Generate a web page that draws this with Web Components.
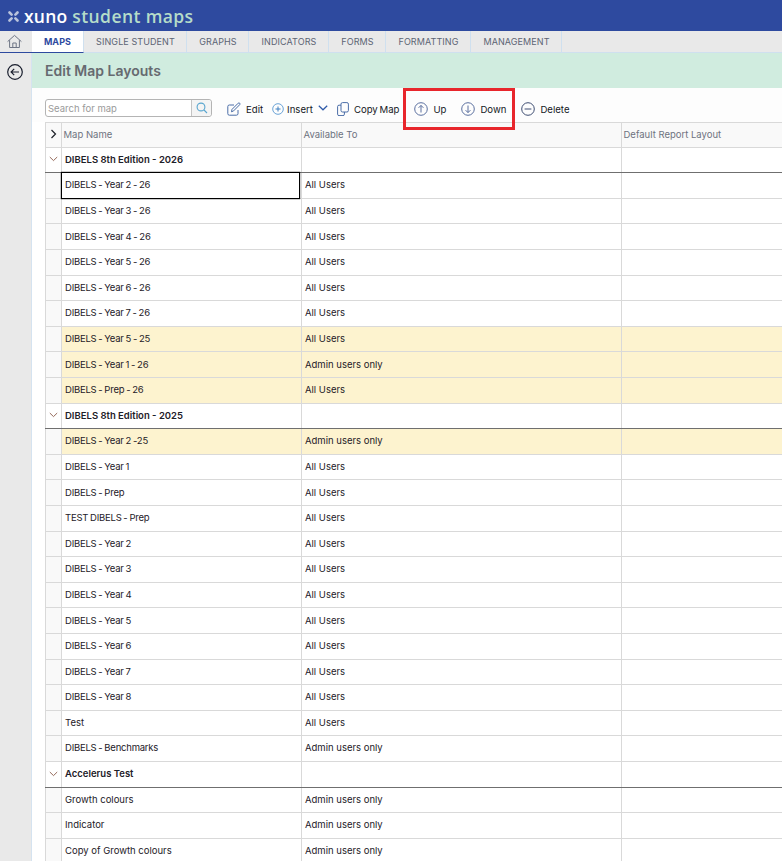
<!DOCTYPE html>
<html><head><meta charset="utf-8"><title>Edit Map Layouts</title>
<style>
html,body{margin:0;padding:0;height:861px;overflow:hidden;background:#fff;font-family:Inter,"Noto Sans",sans-serif}
</style></head><body>
<xuno-app></xuno-app>
<script>
const FONT='Inter,"Noto Sans",sans-serif';
class XunoHeader extends HTMLElement{constructor(){super();this.attachShadow({mode:'open'}).innerHTML=`<style>
:host{display:flex;align-items:center;height:31px;background:#2e4a9f;padding-left:8px;box-sizing:border-box;font:600 17.5px "Open Sans",sans-serif}
svg{width:11px;height:11px;flex:none;margin:1px 5px 0 0}
.a{color:#fff;margin-right:5px;letter-spacing:.2px}.b{color:#b5dcc9;letter-spacing:.4px}
</style><svg viewBox="0 0 11 11"><g stroke="#b9c3dc" stroke-width="2.6" stroke-linecap="round"><path d="M1.5 1.5 3.6 3.6M9.5 1.5 7.4 3.6M1.5 9.5 3.6 7.4M9.5 9.5 7.4 7.4"/></g></svg><span class="a">xuno</span><span class="b">student maps</span>`}}
customElements.define('xuno-header',XunoHeader);
class XunoTabs extends HTMLElement{constructor(){super();const tabs=[['MAPS',52,1],['SINGLE STUDENT',103],['GRAPHS',62],['INDICATORS',80],['FORMS',57],['FORMATTING',85],['MANAGEMENT',91]];
this.attachShadow({mode:'open'}).innerHTML=`<style>
:host{display:flex;height:22px;background:#e9e9e9;box-sizing:border-box;font:400 9px ${FONT};color:#5c6474}
.home{width:32px;box-sizing:border-box;border-bottom:1px solid #2e4a9f;display:flex;align-items:center;padding:0 0 1px 7px}
.t{box-sizing:border-box;display:flex;align-items:center;justify-content:center;padding-left:1px;border-right:1px solid #cfe0ef;border-bottom:1px solid #cfe0ef;letter-spacing:.01em}
.on{background:#fff;color:#2e4a9f;font-weight:700;border-bottom:1px solid #2e4a9f;border-right:1px solid #cfe0ef;padding-left:0}
.rest{flex:1;border-bottom:1px solid #cfe0ef}
</style><div class="home"><svg width="15" height="15" viewBox="0 0 15 15" fill="none" stroke="#6d7484" stroke-width="1"><path d="M.6 7.6 7.5 1.4l6.9 6.2"/><path d="M2.6 6.2v7.3h9.8V6.2"/><path d="M5.8 13.5V9h3.4v4.5"/></svg></div>${tabs.map(t=>`<div class="t${t[2]?' on':''}" style="width:${t[1]}px">${t[0]}</div>`).join('')}<div class="rest"></div>`}}
customElements.define('xuno-tabs',XunoTabs);
class XunoSidebar extends HTMLElement{constructor(){super();this.attachShadow({mode:'open'}).innerHTML=`<style>
:host{display:block;width:32px;flex:none;box-sizing:border-box;background:#e9e9e9;border-right:1px solid #d5e3f0;padding:11px 0 0 7px}
svg{display:block}
</style><svg width="16" height="16" viewBox="0 0 16 16" fill="none" stroke="#1a1f2e" stroke-width="1.2"><circle cx="8" cy="8" r="7.3"/><path d="M12 8H4.2M7.2 4.9 4.1 8l3.1 3.1"/></svg>`}}
customElements.define('xuno-sidebar',XunoSidebar);
class XunoTitle extends HTMLElement{constructor(){super();this.attachShadow({mode:'open'}).innerHTML=`<style>
:host{display:flex;align-items:center;height:35px;background:#d0ecdf;padding-left:13px;font:600 14px ${FONT};color:#666a70}
</style><slot></slot>`}}
customElements.define('xuno-title',XunoTitle);
class XunoSearch extends HTMLElement{constructor(){super();this.attachShadow({mode:'open'}).innerHTML=`<style>
:host{display:flex;width:167px;height:18px;box-sizing:border-box;border:1px solid #b4b4b4;border-radius:3px;background:#fff;font:400 9.5px ${FONT};color:#9a9a9a;flex:none;margin-top:-2px}
.i{flex:1;padding-left:2px;display:flex;align-items:center}
.b{width:20px;box-sizing:border-box;border-left:1px solid #c4c4c4;background:#f4f4f4;display:flex;align-items:center;justify-content:center;border-radius:0 3px 3px 0}
</style><div class="i">Search for map</div><div class="b"><svg width="12" height="12" viewBox="0 0 12 12" fill="none" stroke="#5aa6cf" stroke-width="1.1"><circle cx="5" cy="5" r="3.9"/><path d="m8 8 3 3"/></svg></div>`}}
customElements.define('xuno-search',XunoSearch);
class XunoTool extends HTMLElement{constructor(){super();this.attachShadow({mode:'open'}).innerHTML=`<style>
:host{display:inline-flex;align-items:center;flex:none;font:400 9.6px ${FONT};color:#141824}
span{display:inline-flex;align-items:center}
</style><span part="i"><slot name="icon"></slot></span><slot></slot>`}}
customElements.define('xuno-tool',XunoTool);
const circ=(inner,c='#5a6f9f')=>`<svg slot="icon" width="14" height="14" viewBox="0 0 14 14" fill="none" stroke="${c}" stroke-width="1"><circle cx="7" cy="7" r="6.3"/>${inner}</svg>`;
class XunoToolbar extends HTMLElement{constructor(){super();this.attachShadow({mode:'open'}).innerHTML=`<style>
:host{display:flex;align-items:center;height:34px;padding:8px 0 0 13px;box-sizing:border-box;position:relative;background:#fdfdfd}
xuno-search{margin-right:15px}
svg{margin-right:5px}
.box{position:absolute;left:370.5px;top:0;width:112.5px;height:42px;box-sizing:border-box;border:3.5px solid #e8262c;pointer-events:none;z-index:2}
</style><xuno-search></xuno-search>
<xuno-tool style="margin-right:9px"><svg slot="icon" width="14" height="14" viewBox="0 0 14 14" fill="none" stroke="#4a6da7" stroke-width="1"><path d="M11 8v3.6a1.6 1.6 0 0 1-1.6 1.6H2.4A1.6 1.6 0 0 1 .8 11.6V4.6A1.6 1.6 0 0 1 2.4 3H7"/><path d="M4.5 9.8 5 7.4 11.2 1.2a1 1 0 0 1 1.5 1.5L6.6 8.9z"/></svg>Edit</xuno-tool>
<xuno-tool style="margin-right:9px"><svg slot="icon" width="12" height="12" viewBox="0 0 12 12" fill="none" stroke="#6aa3d6" stroke-width="1" style="margin-right:3px"><circle cx="6" cy="6" r="5.3"/><path d="M6 3.5v5M3.5 6h5" stroke="#3d7fc0"/></svg>Insert<svg width="10" height="6" viewBox="0 0 10 6" fill="none" stroke="#2e5aa8" stroke-width="1.2" style="margin:0 0 2px 5px"><path d="m.8.8 4.2 4 4.2-4"/></svg></xuno-tool>
<xuno-tool style="margin-right:15px;word-spacing:-1px"><svg slot="icon" width="12" height="14" viewBox="0 0 12 14" fill="none" stroke="#4a6da7" stroke-width="1"><rect x="4" y=".6" width="7.4" height="9.4" rx="1.5"/><path d="M4 3.2H2A1.4 1.4 0 0 0 .6 4.6v7.6A1.4 1.4 0 0 0 2 13.6h4a1.4 1.4 0 0 0 1.4-1.4V10"/></svg>Copy Map</xuno-tool>
<xuno-tool style="margin-right:15px">${circ('<path d="M7 10.5v-7M4.6 5.8 7 3.4l2.4 2.4"/>')}Up</xuno-tool>
<xuno-tool style="margin-right:15px">${circ('<path d="M7 3.5v7M4.6 8.2 7 10.6l2.4-2.4"/>')}Down</xuno-tool>
<xuno-tool>${circ('<path d="M3.6 7h6.8"/>','#3e4d72')}Delete</xuno-tool>
<div class="box"></div>`}}
customElements.define('xuno-toolbar',XunoToolbar);
class XunoRow extends HTMLElement{
connectedCallback(){if(this.shadowRoot)return;const k=this.getAttribute('kind')||'';this.attachShadow({mode:'open'}).innerHTML=`<style>
:host{display:grid;grid-template-columns:17px 240px 320px 1fr;height:25.6px;box-sizing:border-box;border-bottom:1px solid ${k==='group'?'#6f6f6f':'#d9d9d9'};font:${k==='group'?'600':'400'} 9.5px ${FONT};color:#1d2028;background:${k==='warn'?'#fdf3cf':'#fff'}}
:host([kind=head]){background:#f9f9f9;color:#6e7380;height:25.7px;border-top:1px solid #d9d9d9;border-bottom:1px solid #d9d9d9}
div{display:flex;align-items:center;box-sizing:border-box;border-right:1px solid #d9d9d9;padding:0 0 1.3px 3px;white-space:nowrap;min-width:0;overflow:hidden}
.g{background:${k==='group'?'#fff':'#f9f9f9'};justify-content:center;padding:0 0 1px;border-left:1px solid #d9d9d9}
.sel{position:relative;overflow:visible}
.sel::after{content:"";position:absolute;left:-1px;right:1px;top:-1px;bottom:-1px;border:1px solid #000;box-shadow:0 0 0 .2px #000;z-index:1}
</style><div class="g"><slot name="g"></slot></div><div class="${this.hasAttribute('sel')?'sel':''}"><slot name="n"></slot></div><div><slot name="a"></slot></div><div style="border-right:0"><slot name="d"></slot></div>`;}}
customElements.define('xuno-row',XunoRow);
const chev=`<svg slot="g" width="9" height="6" viewBox="0 0 9 6" fill="none" stroke="#8a5a4a" stroke-width=".9"><path d="m.8 1 3.7 3.6L8.2 1"/></svg>`;
const R=(n,a,o='')=>`<xuno-row ${o}><span slot="n" style="${n.includes(' - ')||n.includes(' -2')?'letter-spacing:-.22px;word-spacing:-.6px':''}">${n}</span><span slot="a">${a}</span></xuno-row>`;
const G=n=>`<xuno-row kind="group">${chev}<span slot="n">${n}</span></xuno-row>`;
const U='All Users',A='Admin users only';
const rows=[G('DIBELS 8th Edition - 2026'),R('DIBELS - Year 2 - 26',U,'sel'),R('DIBELS - Year 3 - 26',U),R('DIBELS - Year 4 - 26',U),R('DIBELS - Year 5 - 26',U),R('DIBELS - Year 6 - 26',U),R('DIBELS - Year 7 - 26',U),R('DIBELS - Year 5 - 25',U,'kind="warn"'),R('DIBELS - Year 1 - 26',A,'kind="warn"'),R('DIBELS - Prep - 26',U,'kind="warn"'),G('DIBELS 8th Edition - 2025'),R('DIBELS - Year 2 -25',A,'kind="warn"'),R('DIBELS - Year 1',U),R('DIBELS - Prep',U),R('TEST DIBELS - Prep',U),R('DIBELS - Year 2',U),R('DIBELS - Year 3',U),R('DIBELS - Year 4',U),R('DIBELS - Year 5',U),R('DIBELS - Year 6',U),R('DIBELS - Year 7',U),R('DIBELS - Year 8',U),R('Test',U),R('DIBELS - Benchmarks',A),G('Accelerus Test'),R('Growth colours',A),R('Indicator',A),R('Copy of Growth colours',A)].join('');
class XunoTable extends HTMLElement{constructor(){super();this.attachShadow({mode:'open'}).innerHTML=`<style>
:host{display:block;margin-left:13px;overflow:hidden}
</style><xuno-row kind="head"><svg slot="g" width="7" height="10" viewBox="0 0 7 10" fill="none" stroke="#1d2028" stroke-width="1.2"><path d="m1.5 1 4 4-4 4"/></svg><span slot="n" style="margin-left:-1.5px">Map Name</span><span slot="a" style="margin-left:-1.5px">Available To</span><span slot="d" style="margin-left:-1.5px">Default Report Layout</span></xuno-row>${rows}`}}
customElements.define('xuno-table',XunoTable);
class XunoApp extends HTMLElement{constructor(){super();this.attachShadow({mode:'open'}).innerHTML=`<style>
:host{display:flex;flex-direction:column;height:861px;width:782px;overflow:hidden}
.body{display:flex;flex:1;min-height:0}
main{flex:1;min-width:0;overflow:hidden;background:#fff}
</style><xuno-header></xuno-header><xuno-tabs></xuno-tabs><div class="body"><xuno-sidebar></xuno-sidebar><main><xuno-title>Edit Map Layouts</xuno-title><xuno-toolbar></xuno-toolbar><xuno-table></xuno-table></main></div>`}}
customElements.define('xuno-app',XunoApp);
</script></body></html>
